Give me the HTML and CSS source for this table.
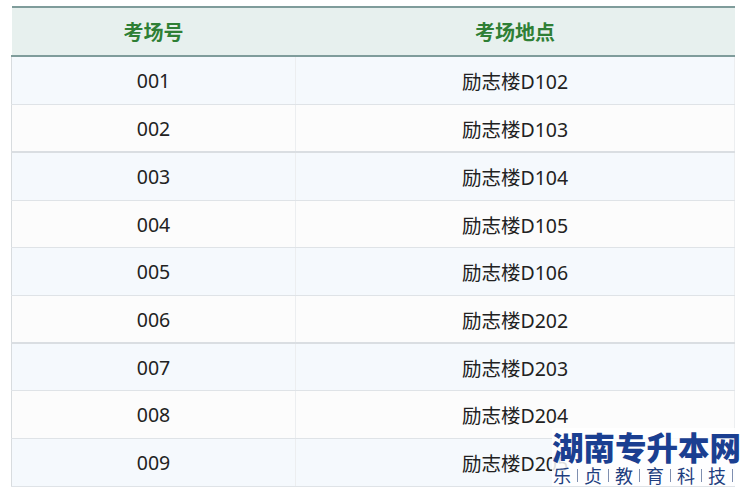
FILE: index.html
```html
<!DOCTYPE html>
<html lang="zh">
<head>
<meta charset="utf-8">
<link rel="stylesheet" href="styles.css">
</head>
<body>
<div class="page">
  <table class="grid">
    <thead>
      <tr><th class="c1">考场号</th><th class="c2">考场地点</th></tr>
    </thead>
    <tbody>
      <tr class="odd"><td>001</td><td>励志楼D102</td></tr>
      <tr class="even thick"><td>002</td><td>励志楼D103</td></tr>
      <tr class="odd"><td>003</td><td>励志楼D104</td></tr>
      <tr class="even short"><td>004</td><td>励志楼D105</td></tr>
      <tr class="odd"><td>005</td><td>励志楼D106</td></tr>
      <tr class="even thick"><td>006</td><td>励志楼D202</td></tr>
      <tr class="odd short"><td>007</td><td>励志楼D203</td></tr>
      <tr class="even"><td>008</td><td>励志楼D204</td></tr>
      <tr class="odd"><td>009</td><td>励志楼D205</td></tr>
    </tbody>
  </table>
  <div class="mark">
    <div class="mark-title">湖南专升本网</div>
    <div class="mark-sub"><span>乐</span><i></i><span>贞</span><i></i><span>教</span><i></i><span>育</span><i></i><span>科</span><i></i><span>技</span><i></i></div>
  </div>
</div>
</body>
</html>
```

FILE: styles.css
```css
html, body {
  margin: 0;
  padding: 0;
  background: #ffffff;
  overflow: hidden;
}
.page {
  position: relative;
  width: 743px;
  height: 489px;
  padding: 6px 0 0 11px;
  box-sizing: border-box;
  font-family: "Noto Sans", "Noto Sans CJK SC", sans-serif;
}
.grid {
  width: 724px;
  border-collapse: collapse;
  table-layout: fixed;
}
.grid th {
  height: 47px;
  background: #e7f0ee;
  color: #2f7f35;
  font-weight: 700;
  font-size: 20px;
  font-family: "Noto Sans CJK SC", sans-serif;
  border-top: 2px solid #7f9c9b;
  border-bottom: 2px solid #7f9c9b;
  padding: 0;
  text-align: center;
}
.grid th.c1 { width: 284px; }
.grid td {
  height: 47px;
  padding: 0;
  text-align: center;
  font-size: 19.5px;
  color: #222222;
  border-bottom: 1px solid #dfe3e7;
  border-left: 1px solid #d8dcdf;
  border-right: 1px solid #eceef0;
}
.grid tr.odd td { background: #f5f9fd; }
.grid tr.even td { background: #fcfcfc; }
.grid tr.thick td { border-bottom: 2px solid #dadee2; height: 46px; }
.grid tr.short td { height: 46px; }

.mark {
  position: absolute;
  left: 552px;
  top: 428px;
  width: 188px;
  background: rgba(255, 255, 255, 0.85);
  color: #1c3d8c;
  font-family: "Noto Sans CJK SC", sans-serif;
}
.mark-title {
  font-size: 31.5px;
  font-weight: 900;
  line-height: 36px;
  white-space: nowrap;
  color: #1b3f91;
}
.mark-sub {
  display: flex;
  align-items: center;
  gap: 6px;
  font-size: 18px;
  line-height: 22px;
  color: #1f3e80;
  padding-left: 1px;
}
.mark-sub i {
  display: block;
  width: 1px;
  height: 13px;
  background: #7f8fb0;
}
```
